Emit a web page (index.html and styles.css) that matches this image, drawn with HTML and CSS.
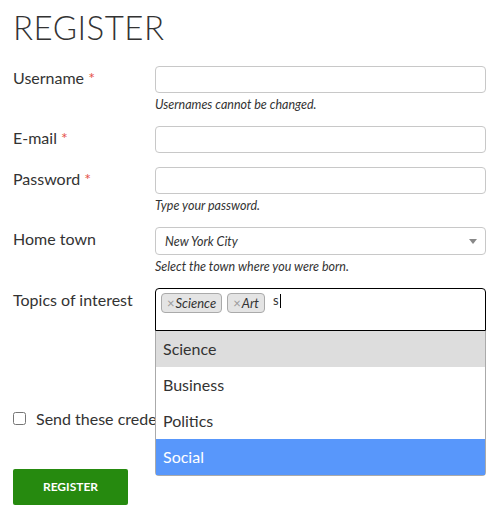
FILE: index.html
```html
<!DOCTYPE html>
<html lang="en">
<head>
    <meta charset="UTF-8" />
    <meta name="viewport" content="width=device-width, initial-scale=1.0" />
    <title>Register</title>
    <link rel="stylesheet" href="styles.css">
</head>
<body>
    <div class="container">
        <h1 class="header">REGISTER</h1>
        <form class="form">
            <div class="row">
                <label class="label">Username <span class="req">*</span></label>
                <div class="field">
                    <input type="text" class="input">
                    <div class="help">Usernames cannot be changed.</div>
                </div>
            </div>
            <div class="row">
                <label class="label">E-mail <span class="req">*</span></label>
                <div class="field">
                    <input type="text" class="input">
                </div>
            </div>
            <div class="row">
                <label class="label">Password <span class="req">*</span></label>
                <div class="field">
                    <input type="password" class="input">
                    <div class="help">Type your password.</div>
                </div>
            </div>
            <div class="row">
                <label class="label">Home town</label>
                <div class="field">
                    <div class="select">
                        <span>New York City</span>
                        <span class="arrow"></span>
                    </div>
                    <div class="help">Select the town where you were born.</div>
                </div>
            </div>
            <div class="row">
                <label class="label">Topics of interest</label>
                <div class="field">
                    <div class="multi">
                        <div class="tags">
                            <span class="tag"><span class="x">&times;</span>Science</span>
                            <span class="tag"><span class="x">&times;</span>Art</span>
                            <span class="typed">s<span class="caret"></span></span>
                        </div>
                        <ul class="dropdown">
                            <li class="option current">Science</li>
                            <li class="option">Business</li>
                            <li class="option">Politics</li>
                            <li class="option active">Social</li>
                        </ul>
                    </div>
                </div>
            </div>
            <div class="check-row">
                <input type="checkbox" class="check">
                <span class="check-text">Send these credentials to my e-mail</span>
            </div>
            <div class="btn-container">
                <a href="#" class="btn">REGISTER</a>
            </div>
        </form>
    </div>
</body>
</html>
```

FILE: styles.css
```css
body {
    font-family: "Lato", "Liberation Sans", sans-serif;
    background-color: #fff;
    color: #333;
    margin: 0;
    padding: 0;
}

.container {
    padding: 9px 16px 0 13px;
}

.header {
    font-weight: 300;
    font-size: 33px;
    letter-spacing: 0.5px;
    margin: 0 0 21px 0;
    line-height: 36px;
}

.row {
    display: grid;
    grid-template-columns: 142px 1fr;
    margin-bottom: 14px;
}

.label {
    font-size: 16px;
    padding-top: 2px;
}

.req {
    color: #e5534b;
}

.input {
    display: block;
    width: 100%;
    box-sizing: border-box;
    height: 27px;
    border: 1px solid #c8c8c8;
    border-radius: 4px;
    margin: 0;
    font-family: inherit;
}

.help {
    font-size: 12.5px;
    font-style: italic;
    margin-top: 4px;
    line-height: 15px;
}

.select {
    display: flex;
    align-items: center;
    justify-content: space-between;
    height: 28px;
    box-sizing: border-box;
    border: 1px solid #c8c8c8;
    border-radius: 4px;
    padding: 0 8px 0 9px;
    font-size: 12.5px;
    font-style: italic;
}

.arrow {
    width: 0;
    height: 0;
    border-left: 4px solid transparent;
    border-right: 4px solid transparent;
    border-top: 5px solid #888;
}

.multi {
    position: relative;
}

.tags {
    display: flex;
    align-items: flex-start;
    gap: 5px;
    height: 43px;
    box-sizing: border-box;
    border: 1px solid #000;
    border-radius: 4px 4px 0 0;
    padding: 4px 5px;
}

.tag {
    background-color: #e4e4e4;
    border: 1px solid #aaa;
    border-radius: 4px;
    font-size: 13px;
    font-style: italic;
    line-height: 18px;
    padding: 0 5px 0 5px;
}

.x {
    color: #999;
    font-style: normal;
    margin-right: 1px;
}

.typed {
    font-size: 13px;
    line-height: 15px;
    margin-left: 3px;
    display: flex;
    align-items: center;
}

.caret {
    display: inline-block;
    width: 1px;
    height: 14px;
    background-color: #000;
    margin-left: 1px;
}

.dropdown {
    position: absolute;
    top: 100%;
    left: 0;
    right: 0;
    margin: 0;
    padding: 0;
    list-style: none;
    background-color: #fff;
    border: 1px solid #aaa;
    border-top: none;
    border-radius: 0 0 4px 4px;
    z-index: 2;
}

.option {
    font-size: 16px;
    height: 36px;
    line-height: 36px;
    padding-left: 7px;
}

.option.current {
    background-color: #ddd;
}

.option.active {
    background-color: #5897fb;
    color: #fff;
}

.check-row {
    display: flex;
    align-items: center;
    gap: 10px;
    font-size: 16px;
    margin-top: 78px;
}

.check {
    margin: 0;
    width: 13px;
    height: 13px;
}

.check-text {
    width: 119px;
    overflow: hidden;
    white-space: nowrap;
}

.btn-container {
    margin-top: 41px;
}

.btn {
    display: inline-block;
    width: 115px;
    height: 36px;
    line-height: 36px;
    text-align: center;
    background-color: #268a0f;
    color: white;
    font-size: 12px;
    font-weight: bold;
    text-decoration: none;
    border-radius: 2px;
}
```
